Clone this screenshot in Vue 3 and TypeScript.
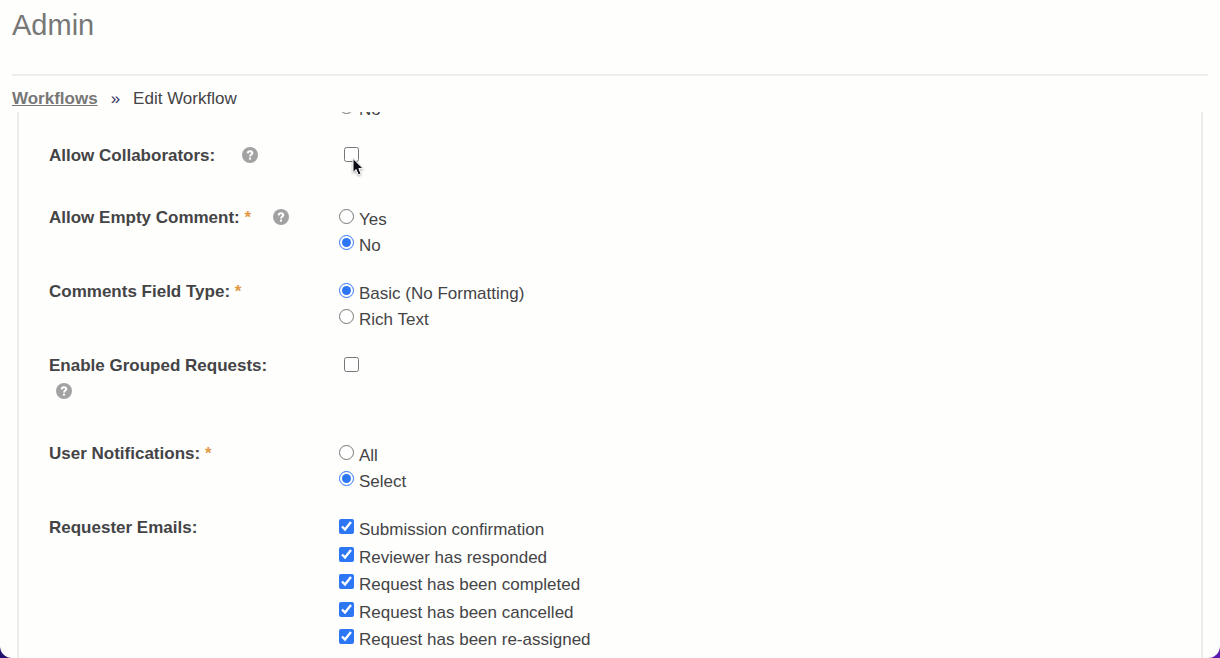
<script setup lang="ts">
import { reactive } from 'vue'

interface Option {
  id: string
  text: string
}

interface Field {
  key: string
  label: string
  kind: 'radio' | 'toggle' | 'checks'
  required?: boolean
  help?: boolean
  options?: Option[]
}

const fields: Field[] = [
  {
    key: 'comment',
    label: 'Allow Empty Comment:',
    kind: 'radio',
    required: true,
    help: true,
    options: [{ id: 'yes', text: 'Yes' }, { id: 'no', text: 'No' }],
  },
  {
    key: 'fieldType',
    label: 'Comments Field Type:',
    kind: 'radio',
    required: true,
    options: [{ id: 'basic', text: 'Basic (No Formatting)' }, { id: 'rich', text: 'Rich Text' }],
  },
  { key: 'grouped', label: 'Enable Grouped Requests:', kind: 'toggle', help: true },
  {
    key: 'notify',
    label: 'User Notifications:',
    kind: 'radio',
    required: true,
    options: [{ id: 'all', text: 'All' }, { id: 'select', text: 'Select' }],
  },
  {
    key: 'emails',
    label: 'Requester Emails:',
    kind: 'checks',
    options: [
      { id: 'submitted', text: 'Submission confirmation' },
      { id: 'responded', text: 'Reviewer has responded' },
      { id: 'completed', text: 'Request has been completed' },
      { id: 'cancelled', text: 'Request has been cancelled' },
      { id: 'reassigned', text: 'Request has been re-assigned' },
    ],
  },
]

const choice = reactive<Record<string, string>>({
  previous: 'yes',
  comment: 'no',
  fieldType: 'basic',
  notify: 'select',
})
const toggles = reactive<Record<string, boolean>>({ collaborators: false, grouped: false })
const emails = reactive<Record<string, boolean>>({
  submitted: true,
  responded: true,
  completed: true,
  cancelled: true,
  reassigned: true,
})
</script>

<template>
  <div class="page">
    <header class="header">
      <h1>Admin</h1>
    </header>
    <nav class="crumbs" aria-label="Breadcrumb">
      <a href="#">Workflows</a>
      <span class="sep">»</span>
      <span>Edit Workflow</span>
    </nav>

    <main class="pane">
      <form class="form" @submit.prevent>
        <div class="row">
          <div class="name"></div>
          <div class="options">
            <label class="option">
              <input v-model="choice.previous" type="radio" name="previous" value="no" />
              <span>No</span>
            </label>
          </div>
        </div>

        <div class="row toggle">
          <div class="name">
            <label for="collaborators">Allow Collaborators:</label>
            {{ ' ' }}<span class="star"></span>
            {{ ' ' }}<button type="button" class="help" aria-label="Help">
              <svg viewBox="0 0 16 16"><circle cx="8" cy="8" r="8" /><path d="M5.7 6.4C5.8 4.9 6.8 4.2 8 4.2s2.3.7 2.3 1.9C10.3 7.6 8.1 7.6 8.1 9.5" /><rect x="7" y="10.6" width="2" height="2" /></svg>
            </button>
          </div>
          <div class="single">
            <input id="collaborators" v-model="toggles.collaborators" type="checkbox" />
            <svg class="cursor" viewBox="0 0 14 20" aria-hidden="true">
              <path d="M2 1.5v14l3.1-3 2.2 5.4 2.7-1.1-2.2-5.2h4.3z" />
            </svg>
          </div>
        </div>

        <div
          v-for="field in fields"
          :key="field.key"
          class="row"
          :class="field.kind"
          :role="field.options ? 'group' : undefined"
          :aria-labelledby="field.options ? field.key + '-name' : undefined"
        >
          <div class="name">
            <label v-if="field.kind === 'toggle'" :for="field.key">{{ field.label }}</label>
            <span v-else :id="field.key + '-name'">{{ field.label }}</span>
            {{ ' ' }}<span class="star">{{ field.required ? '*' : '' }}</span>
            {{ ' ' }}<button v-if="field.help" type="button" class="help" aria-label="Help">
              <svg viewBox="0 0 16 16"><circle cx="8" cy="8" r="8" /><path d="M5.7 6.4C5.8 4.9 6.8 4.2 8 4.2s2.3.7 2.3 1.9C10.3 7.6 8.1 7.6 8.1 9.5" /><rect x="7" y="10.6" width="2" height="2" /></svg>
            </button>
          </div>

          <div v-if="field.kind === 'toggle'" class="single">
            <input :id="field.key" v-model="toggles[field.key]" type="checkbox" />
          </div>
          <div v-else class="options">
            <label v-for="option in field.options" :key="option.id" class="option">
              <input
                v-if="field.kind === 'radio'"
                v-model="choice[field.key]"
                type="radio"
                :name="field.key"
                :value="option.id"
              />
              <input v-else v-model="emails[option.id]" type="checkbox" />
              <span>{{ option.text }}</span>
            </label>
          </div>
        </div>
      </form>
    </main>
  </div>
</template>

<style>
html {
  background: linear-gradient(90deg, #24106e, #5c1cb4);
}
body {
  margin: 0;
}
</style>

<style scoped>
.page {
  box-sizing: border-box;
  display: flex;
  flex-direction: column;
  height: 100vh;
  overflow: hidden;
  background: #fefefd;
  border-radius: 0 0 12px 12px;
  color: #444446;
  font: 17px/26px "Liberation Sans", Arial, Helvetica, sans-serif;
}
.header {
  margin: 0 12px;
  padding: 8px 0 32px;
  border-bottom: 2px solid #ededed;
}
h1 {
  margin: 0;
  color: #777;
  font-size: 29px;
  font-weight: 400;
  line-height: 34px;
}
.crumbs {
  display: flex;
  gap: 13px;
  padding: 10px 12px 0;
}
.crumbs a {
  color: #777;
  font-weight: 700;
  text-decoration: underline;
}
.sep {
  color: #33325c;
}
.pane {
  flex: 1;
  min-height: 0;
  overflow: hidden;
  margin: 0 17px;
  border: solid #ededed;
  border-width: 0 2px;
}
.form {
  display: flex;
  flex-direction: column;
  gap: 22px;
  margin-top: -17px;
  padding: 0 30px;
}
.row {
  display: grid;
  grid-template-columns: 246px 1fr;
  column-gap: 44px;
}
.toggle {
  padding-bottom: 14px;
}
.name {
  font-weight: 700;
}
.star {
  display: inline-block;
  margin-right: 10px;
  color: #e39a45;
}
.help {
  width: 16px;
  height: 16px;
  margin: 0 0 0 7px;
  padding: 0;
  border: 0;
  background: none;
  vertical-align: -2px;
}
.help svg {
  display: block;
  width: 16px;
  height: 16px;
}
.help circle {
  fill: #a2a2a2;
}
.help rect {
  fill: #fff;
}
.help path {
  fill: none;
  stroke: #fff;
  stroke-width: 2;
}
.options {
  height: 52px;
}
.row:first-child .options {
  height: auto;
}
.checks .options {
  display: grid;
  height: 138px;
}
.option {
  display: flex;
  gap: 5px;
  width: fit-content;
}
.option span {
  padding-top: 2px;
  margin-bottom: -2px;
}
input {
  width: 15px;
  height: 15px;
  margin: 4px 0 0;
  accent-color: #2d76f4;
}
.single {
  position: relative;
  padding-left: 5px;
}
.single input {
  display: block;
}
.cursor {
  position: absolute;
  left: 12px;
  top: 14px;
  width: 14px;
  height: 20px;
  fill: #0c0c14;
  stroke: #fff;
  stroke-width: 1;
  filter: drop-shadow(0 1px 1px rgba(0, 0, 0, 0.3));
}
</style>
